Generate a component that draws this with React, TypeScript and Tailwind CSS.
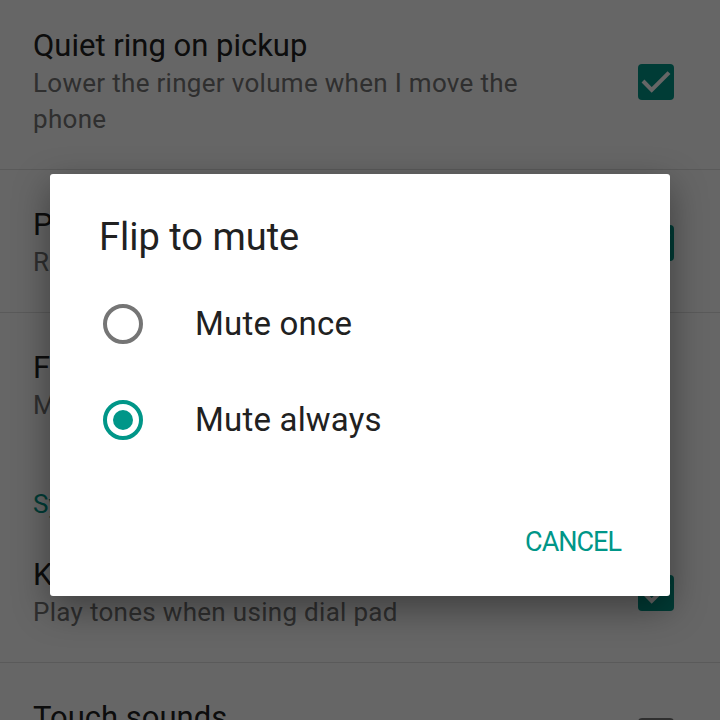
import * as React from 'react';
import { useState } from 'react';

const font = { fontFamily: 'Roboto, "Noto Sans", sans-serif' };

interface PrefRowProps {
  title: string;
  summary?: string;
  checked?: boolean;
}

function CheckBox({ checked }: { checked: boolean }) {
  if (!checked) {
    return <div className="w-[36px] h-[36px] rounded-[4px] border-[4px] border-[#757575] shrink-0" />;
  }
  return (
    <div className="w-[36px] h-[36px] rounded-[4px] bg-[#009688] shrink-0">
      <svg width="36" height="36" viewBox="0 0 36 36" fill="none">
        <path d="M5 17l8.7 9L31 8.7" stroke="#ffffff" strokeWidth="4" />
      </svg>
    </div>
  );
}

function PrefRow({ title, summary, checked }: PrefRowProps) {
  return (
    <div className="flex items-center border-b border-[#e0e0e0] pl-[33px] pr-[46px] pt-[36px] pb-[32px]">
      <div className="flex-1 pr-[54px]">
        <div className="text-[31px] leading-[38px] text-[#212121]">{title}</div>
        {summary && (
          <div className="text-[26px] leading-[36px] tracking-[0.3px] text-[#757575]">{summary}</div>
        )}
      </div>
      {checked !== undefined && <CheckBox checked={checked} />}
    </div>
  );
}

function Radio({ selected }: { selected: boolean }) {
  return (
    <div
      className={
        selected
          ? 'w-[40px] h-[40px] rounded-full border-[4px] border-[#009688] flex items-center justify-center shrink-0'
          : 'w-[40px] h-[40px] rounded-full border-[4px] border-[#757575] shrink-0'
      }
    >
      {selected && <div className="w-[20px] h-[20px] rounded-full bg-[#009688]" />}
    </div>
  );
}

export default function App() {
  const [mode, setMode] = useState('always');
  const options = [
    { id: 'once', label: 'Mute once' },
    { id: 'always', label: 'Mute always' },
  ];

  return (
    <div className="relative w-[720px] h-[720px] overflow-hidden bg-white" style={font}>
      {/* Settings list, scrolled a little */}
      <div className="-mt-[9px]">
        <PrefRow title="Quiet ring on pickup" summary="Lower the ringer volume when I move the phone" checked />
        <PrefRow title="Pocket mode" summary="Ring louder in a pocket" checked />
        <div className="pl-[33px] pr-[46px] pt-[36px] pb-[32px]">
          <div className="text-[31px] leading-[38px] text-[#212121]">Flip to mute</div>
          <div className="text-[26px] leading-[36px] tracking-[0.3px] text-[#757575]">Mute always</div>
        </div>
        <div className="pl-[33px] pt-[34px] text-[26px] leading-[31px] text-[#009688]">System sounds</div>
        <PrefRow title="Keypad tones" summary="Play tones when using dial pad" checked />
        <PrefRow title="Touch sounds" summary="Play sound when making selection" checked={false} />
      </div>

      {/* Dimmed backdrop + dialog */}
      <div className="absolute inset-0 bg-black/60 flex justify-center items-start pt-[174px]">
        <div className="w-[620px] bg-white rounded-[3px] shadow-[0_12px_36px_rgba(0,0,0,0.4)]">
          <div className="pl-[49px] pt-[41px] text-[38px] leading-[44px] text-[#212121]">Flip to mute</div>
          <div className="mt-[17px]">
            {options.map((o) => (
              <button
                key={o.id}
                onClick={() => setMode(o.id)}
                className="w-full h-[96px] flex items-center pl-[53px] text-left"
              >
                <Radio selected={mode === o.id} />
                <span className="ml-[52px] text-[33px] leading-[40px] tracking-[0.2px] text-[#212121]">{o.label}</span>
              </button>
            ))}
          </div>
          <div className="flex justify-end pr-[49px] pt-[56px] pb-[36px]">
            <button className="text-[27px] leading-[36px] tracking-[-1px] text-[#009688] uppercase">Cancel</button>
          </div>
        </div>
      </div>
    </div>
  );
}
